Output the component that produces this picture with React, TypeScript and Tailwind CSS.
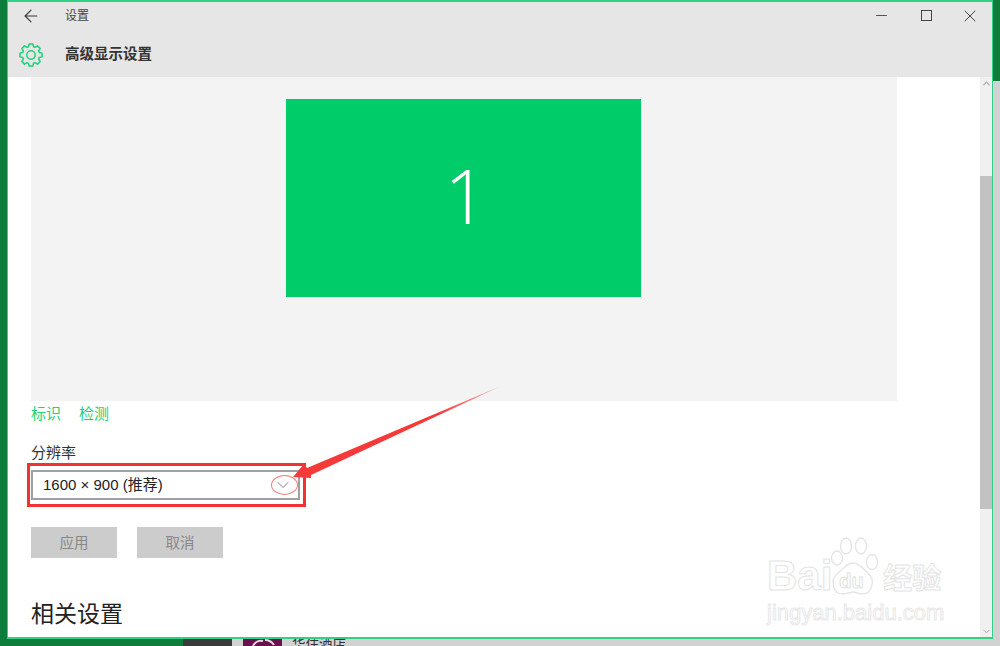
import { ArrowLeft, ChevronDown, ChevronUp, Minus, X } from "lucide-react";

const cjk = "font-['Liberation_Sans','Noto_Sans_CJK_SC',sans-serif]";

// eight tooth gear outline, like the Windows 10 settings icon
function gearPoints() {
  const pts: string[] = [];
  for (let i = 0; i < 8; i++) {
    const a = (i * Math.PI) / 4;
    const steps: [number, number][] = [
      [8.6, -0.3],
      [11.2, -0.17],
      [11.2, 0.17],
      [8.6, 0.3],
    ];
    for (const [r, d] of steps) {
      pts.push(`${(12 + r * Math.cos(a + d)).toFixed(2)},${(12 + r * Math.sin(a + d)).toFixed(2)}`);
    }
  }
  return pts.join(" ");
}

function TitleBar() {
  return (
    <div className="bg-[#e6e6e6] h-[75px] shrink-0 flex flex-col">
      <div className="h-[27px] flex items-center">
        <ArrowLeft className="ml-[13px] text-[#333]" size={20} strokeWidth={1.3} />
        <span className="ml-[24px] text-[12px] text-[#444]">设置</span>
        <div className="ml-auto flex items-center mr-[12px] text-[#444]">
          <Minus size={17} strokeWidth={1.3} />
          <div className="ml-[31px] w-[11px] h-[11px] border-[1.5px] border-[#444]" />
          <X className="ml-[28px]" size={20} strokeWidth={1.2} />
        </div>
      </div>
      <div className="h-[48px] flex items-center pt-[4px]">
        <svg className="ml-[11px] text-[#1ed276]" width="24" height="24" viewBox="0 0 24 24" fill="none" stroke="currentColor" strokeWidth="1.5" strokeLinejoin="round">
          <polygon points={gearPoints()} />
          <circle cx="12" cy="12" r="4.2" />
        </svg>
        <span className="ml-[22px] text-[14.5px] font-bold text-[#333]">高级显示设置</span>
      </div>
    </div>
  );
}

function Content() {
  return (
    <div className="flex-1 pl-[23px] overflow-hidden">
      <div className="w-[866px] h-[324px] bg-[#f3f3f3] flex justify-center pt-[22px] pr-[1px]">
        <div className="w-[355px] h-[198px] bg-[#00cc6a] flex items-center justify-center pb-[6px] pl-[5px]">
          <span className="text-[75px] text-white font-['Open_Sans',sans-serif] font-light leading-none">1</span>
        </div>
      </div>
      <div className="flex gap-[18px] mt-[4px] text-[15px] leading-[18px] text-[#1ed276]">
        <span>标识</span>
        <span>检测</span>
      </div>
      <div className="mt-[21px] text-[15px] leading-[18px] text-[#333]">分辨率</div>
      <div className="mt-[8px] w-[269px] h-[30px] border-2 border-[#a0a0a0] bg-white flex items-center pl-[10px] pr-[5px] text-[15px] text-[#222]">
        <span>1600 × 900 (推荐)</span>
        <ChevronDown className="ml-auto text-[#777]" size={20} strokeWidth={1.1} />
      </div>
      <div className="flex gap-[20px] mt-[27px]">
        <div className="w-[86px] h-[31px] pt-[2px] bg-[#cccccc] text-[#888] text-[14.5px] flex items-center justify-center">应用</div>
        <div className="w-[86px] h-[31px] pt-[2px] bg-[#cccccc] text-[#888] text-[14.5px] flex items-center justify-center">取消</div>
      </div>
      <div className="mt-[39px] text-[23px] leading-[34px] text-[#222]">相关设置</div>
    </div>
  );
}

function Scrollbar() {
  return (
    <div className="w-[12px] shrink-0 bg-[#f0f0f0] flex flex-col items-center">
      <ChevronUp className="mt-[1px] text-[#aaa]" size={11} strokeWidth={3} />
      <div className="w-full h-[333px] mt-[87px] bg-[#c2c2c2]" />
      <ChevronDown className="mt-auto text-[#aaa]" size={11} strokeWidth={2} />
    </div>
  );
}

const outline = "text-white [-webkit-text-stroke:1px_#e4e4e4] font-bold";

function Watermark() {
  return (
    <div className="absolute left-[767px] top-[537px] w-[178px] select-none">
      <div className="flex items-end h-[60px]">
        <span className={`text-[42px] leading-[42px] ${outline}`}>Bai</span>
        <div className="relative w-[54px] h-[60px] shrink-0 -ml-[6px]">
          <svg className="absolute inset-0" width="54" height="60" viewBox="0 0 54 60" fill="#fff" stroke="#e4e4e4" strokeWidth="1.3">
            <ellipse cx="11" cy="21" rx="5.5" ry="7" />
            <ellipse cx="20" cy="9" rx="5.5" ry="8" />
            <ellipse cx="35" cy="9" rx="5.5" ry="8" />
            <ellipse cx="46" cy="25" rx="5.5" ry="7.5" />
            <path d="M27 26c6 0 9 5 15 10 8 7 4 21-6 21-4 0-6-2-9-2s-6 2-10 2C7 57 3 43 12 36c6-4 8-10 15-10z" />
          </svg>
          <span className={`absolute left-[13px] top-[34px] text-[20px] leading-[20px] ${outline}`}>du</span>
        </div>
        <span className={`ml-[3px] text-[29px] leading-[36px] whitespace-nowrap ${outline}`}>经验</span>
      </div>
      <div className="text-[22px] leading-[24px] mt-[4px] whitespace-nowrap text-white [-webkit-text-stroke:1px_#e8e8e8]">jingyan.baidu.com</div>
    </div>
  );
}

export default function App() {
  return (
    <div className={`relative w-[1000px] h-[646px] overflow-hidden bg-[#d2d2d2] ${cjk}`}>
      {/* desktop behind the window */}
      <div className="absolute left-0 top-0 w-[8px] h-full bg-[#0e7c3a]" />
      <div className="absolute right-0 top-0 w-[8px] h-[81px] bg-[#0e7c3a]" />
      <div className="absolute left-0 bottom-0 w-[183px] h-[8px] bg-[#0e7c3a]" />
      <div className="absolute left-[183px] bottom-0 w-[49px] h-[8px] bg-[#3a3a3a]" />
      <div className="absolute left-[243px] bottom-0 w-[39px] h-[8px] bg-[#6b0f4e]" />
      <svg className="absolute left-[243px] top-[638px]" width="39" height="8" viewBox="0 0 39 8" fill="none" stroke="#e8d8e2" strokeWidth="2">
        <path d="M10 8c2-4 6-6 10-5M22 2c4 0 7 2 9 5" />
      </svg>
      <span className="absolute left-[292px] top-[637px] text-[13.5px] leading-[16px] text-[#333]">华住酒店</span>

      <div className="absolute left-[7px] top-0 w-[986px] h-[639px] border-x-[1px] border-y-[2px] border-[#2fd088] bg-white flex flex-col overflow-hidden">
        <TitleBar />
        <div className="flex-1 flex min-h-0">
          <Content />
          <Scrollbar />
        </div>
      </div>

      <Watermark />

      {/* red annotation */}
      <div className="absolute left-[27px] top-[463px] w-[279px] h-[44px] border-[3px] border-[#f23232]" />
      <div className="absolute left-[271px] top-[475px] w-[27px] h-[20px] rounded-[50%] border border-[#f47a7a]" />
      <svg className="absolute left-[285px] top-[380px]" width="220" height="110" viewBox="0 0 220 110">
        <defs>
          <linearGradient id="arrowFade" x1="0" y1="1" x2="1" y2="0">
            <stop offset="0.7" stopColor="#f63a3a" />
            <stop offset="1" stopColor="#f9b0b0" />
          </linearGradient>
        </defs>
        <path d="M216 6 L22 88 L19 84 L8 97 L26 98 L26 95 Z" fill="url(#arrowFade)" />
      </svg>
    </div>
  );
}
